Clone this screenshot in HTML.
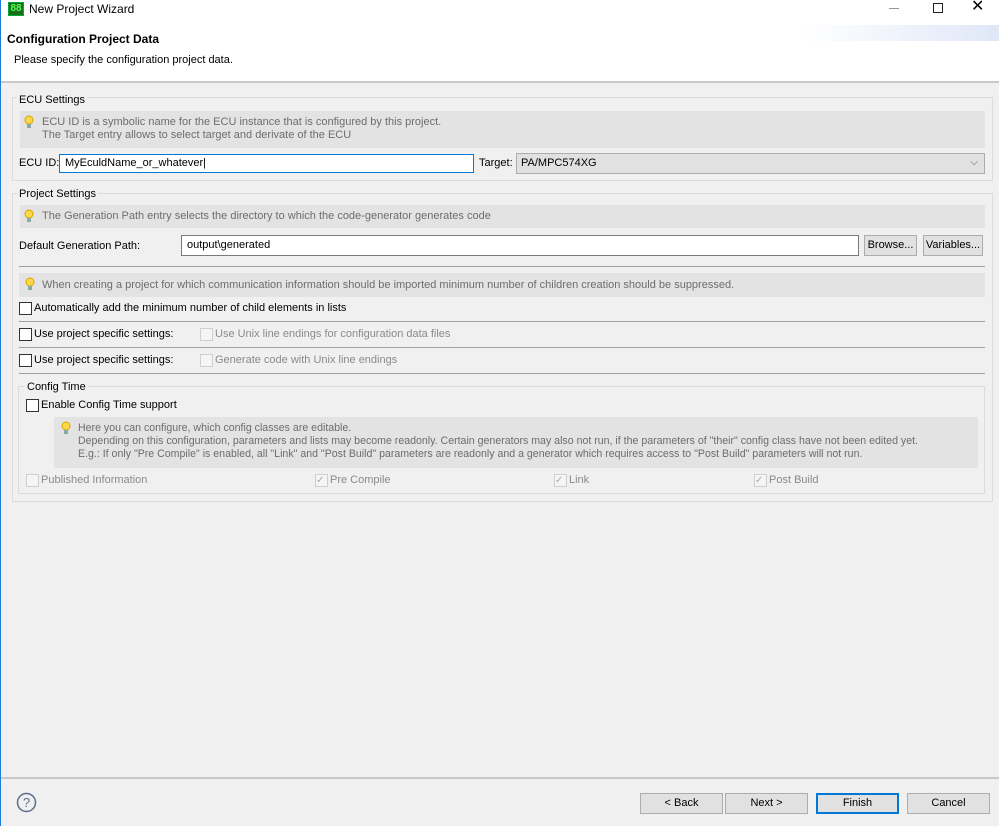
<!DOCTYPE html><html><head><style>
*{box-sizing:border-box;margin:0;padding:0}
body{width:999px;height:826px;background:#f0f0f0;font-family:"Liberation Sans",sans-serif;font-size:11px;color:#000;position:relative;overflow:hidden;border-left:1px solid #1e7bd6}
.a{position:absolute;white-space:nowrap;line-height:15px}
.grp{position:absolute;border:1px solid #dcdcdc}
.lbl{position:absolute;background:#f0f0f0;padding:0 2px;line-height:14px}
.info{position:absolute;background:#e3e3e3;color:#6d6d6d;line-height:13px;white-space:nowrap}
.cb{position:absolute;width:13px;height:13px;border:1px solid #333;background:#fff}
.cbd{position:absolute;width:13px;height:13px;border:1px solid #cfcfcf;background:#f5f5f5}
.hl{position:absolute;height:1px;background:#a0a0a0}
.btn{position:absolute;height:21px;background:#e1e1e1;border:1px solid #adadad;text-align:center;line-height:19px}
.dis{color:#8a8a8a}
</style></head><body>
<div class="a" style="left:0;top:0;width:998px;height:82px;background:#fff"></div>
<div class="a" style="left:800px;top:25px;width:199px;height:16px;background:linear-gradient(90deg,rgba(255,255,255,0),#dfe7f7)"></div>
<div class="a" style="left:7px;top:2px;width:16px;height:14px;background:#1a6e1a;border:1px solid #0a3;color:#5f5;font-size:10px;line-height:12px;text-align:center;font-weight:bold">88</div>
<div class="a" style="left:28px;top:2px;font-size:12px">New Project Wizard</div>
<div class="a" style="left:888px;top:8px;width:10px;height:1px;background:#999"></div>
<div class="a" style="left:932px;top:3px;width:10px;height:10px;border:1px solid #222"></div>
<div class="a" style="left:970px;top:-1px;font-size:16px">✕</div>
<div class="a" style="left:6px;top:32px;font-weight:bold;font-size:12px">Configuration Project Data</div>
<div class="a" style="left:13px;top:53px">Please specify the configuration project data.</div>
<div class="a" style="left:0;top:81px;width:999px;height:2px;background:#c8c8c8"></div>

<div class="grp" style="left:11px;top:97px;width:981px;height:84px"></div>
<div class="lbl" style="left:16px;top:93px">ECU Settings</div>
<div class="info" style="left:19px;top:111px;width:965px;height:37px;padding:5px 0 0 22px">ECU ID is a symbolic name for the ECU instance that is configured by this project.<br>The Target entry allows to select target and derivate of the ECU</div>
<div class="a" style="left:18px;top:156px">ECU ID:</div>
<div class="a" style="left:58px;top:154px;width:415px;height:19px;background:#fff;border:1px solid #0078d7;padding:1px 0 0 5px">MyEculdName_or_whatever|</div>
<div class="a" style="left:478px;top:156px">Target:</div>
<div class="a" style="left:515px;top:153px;width:469px;height:21px;background:#e1e1e1;border:1px solid #adadad;padding:2px 0 0 4px">PA/MPC574XG<span style="position:absolute;right:6px;top:1px;color:#555;font-size:10px">⌵</span></div>

<div class="grp" style="left:11px;top:193px;width:981px;height:309px"></div>
<div class="lbl" style="left:16px;top:187px">Project Settings</div>
<div class="info" style="left:19px;top:205px;width:965px;height:23px;padding:5px 0 0 22px">The Generation Path entry selects the directory to which the code-generator generates code</div>
<div class="a" style="left:18px;top:239px">Default Generation Path:</div>
<div class="a" style="left:180px;top:235px;width:678px;height:21px;background:#fff;border:1px solid #7a7a7a;padding:2px 0 0 5px">output\generated</div>
<div class="btn" style="left:863px;top:235px;width:53px">Browse...</div>
<div class="btn" style="left:922px;top:235px;width:60px">Variables...</div>
<div class="hl" style="left:18px;top:266px;width:966px"></div>
<div class="info" style="left:18px;top:273px;width:966px;height:24px;padding:6px 0 0 23px">When creating a project for which communication information should be imported minimum number of children creation should be suppressed.</div>
<div class="cb" style="left:18px;top:302px"></div><div class="a" style="left:33px;top:301px">Automatically add the minimum number of child elements in lists</div>
<div class="hl" style="left:18px;top:321px;width:966px"></div>
<div class="cb" style="left:18px;top:328px"></div><div class="a" style="left:33px;top:327px">Use project specific settings:</div>
<div class="cbd" style="left:199px;top:328px"></div><div class="a dis" style="left:214px;top:327px">Use Unix line endings for configuration data files</div>
<div class="hl" style="left:18px;top:347px;width:966px"></div>
<div class="cb" style="left:18px;top:354px"></div><div class="a" style="left:33px;top:353px">Use project specific settings:</div>
<div class="cbd" style="left:199px;top:354px"></div><div class="a dis" style="left:214px;top:353px">Generate code with Unix line endings</div>
<div class="hl" style="left:18px;top:373px;width:966px"></div>

<div class="grp" style="left:17px;top:386px;width:967px;height:108px"></div>
<div class="lbl" style="left:24px;top:380px">Config Time</div>
<div class="cb" style="left:25px;top:399px"></div><div class="a" style="left:40px;top:398px">Enable Config Time support</div>
<div class="info" style="left:53px;top:417px;width:924px;height:51px;padding:5px 0 0 24px;font-size:10.6px">Here you can configure, which config classes are editable.<br>Depending on this configuration, parameters and lists may become readonly. Certain generators may also not run, if the parameters of "their" config class have not been edited yet.<br>E.g.: If only "Pre Compile" is enabled, all "Link" and "Post Build" parameters are readonly and a generator which requires access to "Post Build" parameters will not run.</div>
<div class="cbd" style="left:25px;top:474px"></div><div class="a dis" style="left:40px;top:473px">Published Information</div>
<div class="cbd" style="left:314px;top:474px;color:#aaa;font-size:10px;line-height:11px">✓</div><div class="a dis" style="left:329px;top:473px">Pre Compile</div>
<div class="cbd" style="left:553px;top:474px;color:#aaa;font-size:10px;line-height:11px">✓</div><div class="a dis" style="left:568px;top:473px">Link</div>
<div class="cbd" style="left:753px;top:474px;color:#aaa;font-size:10px;line-height:11px">✓</div><div class="a dis" style="left:768px;top:473px">Post Build</div>

<svg class="a" style="left:23px;top:115px" width="10" height="15"><circle cx="5" cy="5" r="4" fill="#ffd84a" stroke="#d9a300"/><rect x="3" y="9" width="4" height="4" fill="#8aa"/></svg>
<svg class="a" style="left:23px;top:209px" width="10" height="15"><circle cx="5" cy="5" r="4" fill="#ffd84a" stroke="#d9a300"/><rect x="3" y="9" width="4" height="4" fill="#8aa"/></svg>
<svg class="a" style="left:24px;top:277px" width="10" height="15"><circle cx="5" cy="5" r="4" fill="#ffd84a" stroke="#d9a300"/><rect x="3" y="9" width="4" height="4" fill="#8aa"/></svg>
<svg class="a" style="left:60px;top:421px" width="10" height="15"><circle cx="5" cy="5" r="4" fill="#ffd84a" stroke="#d9a300"/><rect x="3" y="9" width="4" height="4" fill="#8aa"/></svg>

<div class="a" style="left:0;top:777px;width:999px;height:2px;background:#c8c8c8"></div>
<svg class="a" style="left:15px;top:792px" width="21" height="21"><circle cx="10.5" cy="10.5" r="9" fill="none" stroke="#5a6e8a" stroke-width="1.5"/><text x="10.5" y="15" font-family="Liberation Sans" font-size="13" fill="#5a6e8a" text-anchor="middle">?</text></svg>
<div class="btn" style="left:639px;top:793px;width:83px">&lt; Back</div>
<div class="btn" style="left:724px;top:793px;width:83px">Next &gt;</div>
<div class="btn" style="left:815px;top:793px;width:83px;border:2px solid #0078d7;line-height:17px">Finish</div>
<div class="btn" style="left:906px;top:793px;width:83px">Cancel</div>
</body></html>
